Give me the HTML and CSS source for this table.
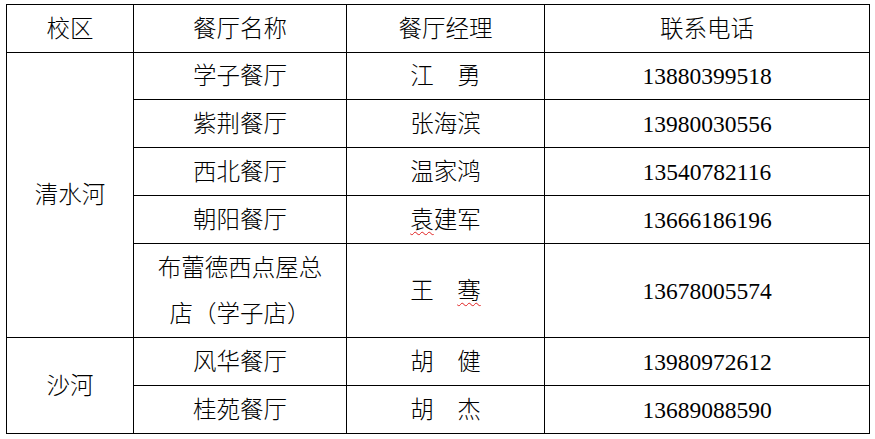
FILE: index.html
```html
<!DOCTYPE html>
<html lang="zh-CN">
<head>
<meta charset="utf-8">
<link rel="stylesheet" href="styles.css">
</head>
<body>
<table class="sheet">
  <colgroup>
    <col class="c-campus">
    <col class="c-name">
    <col class="c-manager">
    <col class="c-phone">
  </colgroup>
  <tr class="row">
    <td>校区</td><td>餐厅名称</td><td>餐厅经理</td><td>联系电话</td>
  </tr>
  <tr class="row row-short">
    <td rowspan="5">清水河</td><td>学子餐厅</td><td>江　勇</td><td class="num">13880399518</td>
  </tr>
  <tr class="row">
    <td>紫荆餐厅</td><td>张海滨</td><td class="num">13980030556</td>
  </tr>
  <tr class="row">
    <td>西北餐厅</td><td>温家鸿</td><td class="num">13540782116</td>
  </tr>
  <tr class="row">
    <td>朝阳餐厅</td><td><span class="spell">袁</span>建军</td><td class="num">13666186196</td>
  </tr>
  <tr class="row row-tall">
    <td class="two-line">布蕾德西点屋总<br>店（学子店）</td><td>王　<span class="spell">骞</span></td><td class="num">13678005574</td>
  </tr>
  <tr class="row">
    <td rowspan="2">沙河</td><td>风华餐厅</td><td>胡　健</td><td class="num">13980972612</td>
  </tr>
  <tr class="row">
    <td>桂苑餐厅</td><td>胡　杰</td><td class="num">13689088590</td>
  </tr>
</table>
</body>
</html>
```

FILE: styles.css
```css
html, body {
  margin: 0;
  padding: 0;
  background: #fff;
}
body {
  padding: 4px 0 0 6px;
  font-family: "Liberation Serif", "Noto Sans CJK SC", serif;
  font-size: 23.5px;
  font-weight: 300;
  color: #000;
}
.sheet {
  border-collapse: collapse;
  table-layout: fixed;
  width: 863px;
}
.c-campus { width: 127px; }
.c-name { width: 213px; }
.c-manager { width: 198px; }
.c-phone { width: 325px; }
.sheet td {
  border: 1px solid #000;
  padding: 0;
  text-align: center;
  vertical-align: middle;
  line-height: 28px;
  white-space: nowrap;
}
.row { height: 48px; }
.row-short { height: 47px; }
.row-tall { height: 94px; }
.sheet .two-line { line-height: 46px; }
.spell {
  text-decoration: underline wavy #e02020;
  text-decoration-thickness: 1px;
  text-underline-offset: 3px;
}
```
